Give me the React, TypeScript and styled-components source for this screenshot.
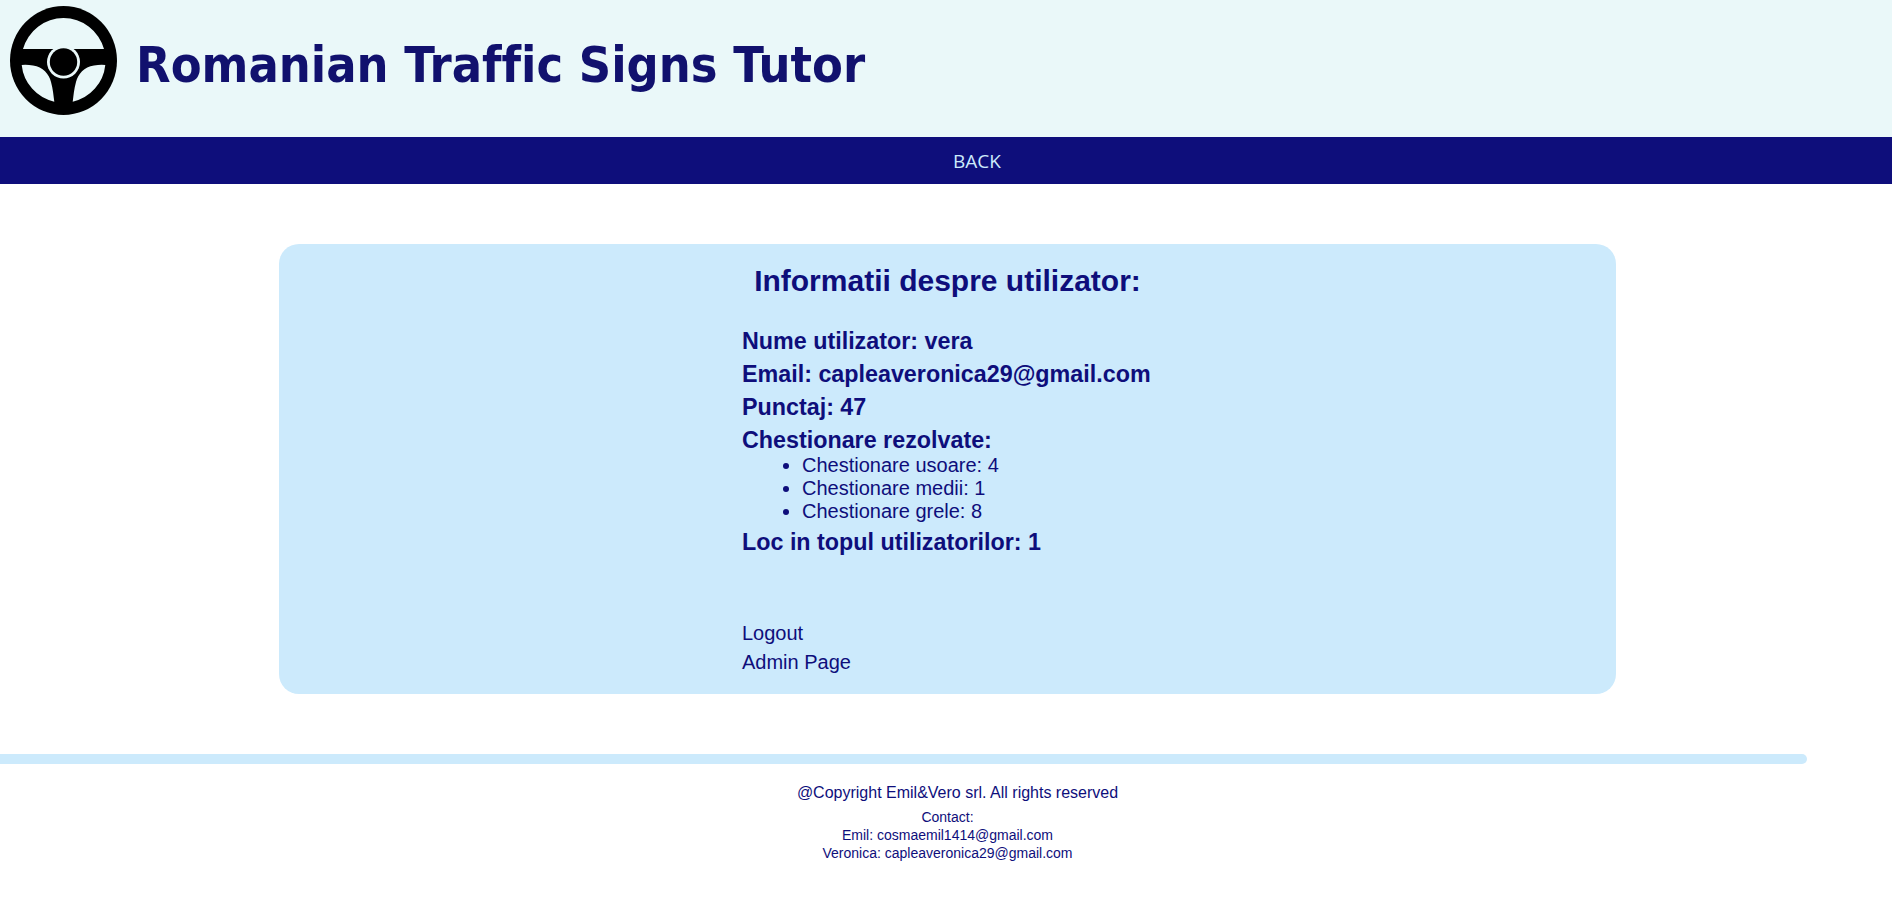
import React from 'react';
import styled, { createGlobalStyle } from 'styled-components';

const navy = '#0e0e7b';
const pale = '#cceafc';
const headerBg = '#eaf8f9';

const GlobalStyle = createGlobalStyle`
  html, body {
    margin: 0;
    padding: 0;
    background: #fff;
    font-family: "Liberation Sans", Arial, sans-serif;
    color: ${navy};
  }
`;

const Header = styled.header`
  height: 137px;
  background: ${headerBg};
  display: flex;
  align-items: flex-start;
  padding: 6px 0 0 10px;
  box-sizing: border-box;
  column-gap: 19px;
`;

const Title = styled.h1`
  margin: 30px 0 0;
  font-family: "DejaVu Sans Condensed", "DejaVu Sans", sans-serif;
  font-stretch: condensed;
  font-size: 50px;
  line-height: 58px;
  font-weight: bold;
  font-variant-ligatures: none;
  color: #11116e;
  white-space: nowrap;
`;

const Nav = styled.nav`
  height: 47px;
  background: ${navy};
  display: flex;
  align-items: center;
  justify-content: center;
  padding-left: 62px;
`;

const NavLink = styled.a`
  font-family: "Open Sans", sans-serif;
  font-size: 19px;
  color: #cceafc;
`;

const Card = styled.main`
  width: 1337px;
  height: 450px;
  box-sizing: border-box;
  margin: 60px 0 60px 279px;
  padding-top: 20px;
  background: ${pale};
  border-radius: 20px;
`;

const CardTitle = styled.h2`
  margin: 0 0 31px;
  font-size: 30px;
  line-height: 33px;
  font-weight: bold;
  text-align: center;
`;

const Details = styled.div`
  margin-left: 463px;
`;

const Row = styled.div`
  font-size: 23.3px;
  line-height: 27px;
  font-weight: bold;
  margin-bottom: 6px;
`;

const SubList = styled.ul`
  margin: -6px 0 6px;
  padding: 0 0 0 60px;
  font-size: 20px;
  line-height: 23px;
`;

const Links = styled.div`
  margin-top: 66px;
  display: flex;
  flex-direction: column;
  row-gap: 6px;
`;

const PlainLink = styled.a`
  font-size: 20px;
  line-height: 23px;
`;

const Divider = styled.div`
  width: 1807px;
  height: 10px;
  background: ${pale};
  border-radius: 0 5px 5px 0;
`;

const Footer = styled.footer`
  padding-top: 19px;
  text-align: center;
`;

const Copyright = styled.div`
  width: 1915px;
  font-size: 16px;
  line-height: 19px;
  margin-bottom: 6px;
`;

const ContactLine = styled.div`
  width: 1895px;
  font-size: 14px;
  line-height: 18px;
`;

const SteeringWheel = () => (
  <svg width="107" height="109" viewBox="0 0 107 109" aria-hidden="true">
    <ellipse cx="53.5" cy="54.5" rx="53.5" ry="54.5" fill="#000" />
    <g fill={headerBg}>
      <path d="M13 43A42 42 0 0 1 94 43Z" />
      <path d="M11.7 59Q17 58.5 23 59.5C33 61 39 68 41 76C43 83 43.500 90 44.300 95.700A42 42 0 0 1 11.700 59Z" />
      <path d="M95.300 59Q90 58.500 84 59.500C74 61 68 68 66 76C64 83 63.500 90 62.700 95.700A42 42 0 0 0 95.300 59Z" />
    </g>
    <circle cx="53.5" cy="56" r="16.5" fill={headerBg} />
    <circle cx="53.5" cy="56" r="13.7" fill="#000" />
  </svg>
);

const App: React.FC = () => (
  <>
    <GlobalStyle />
    <Header>
      <SteeringWheel />
      <Title>Romanian Traffic Signs Tutor</Title>
    </Header>
    <Nav>
      <NavLink>BACK</NavLink>
    </Nav>
    <Card>
      <CardTitle>Informatii despre utilizator:</CardTitle>
      <Details>
        <Row>Nume utilizator: vera</Row>
        <Row>Email: capleaveronica29@gmail.com</Row>
        <Row>Punctaj: 47</Row>
        <Row>Chestionare rezolvate:</Row>
        <SubList>
          <li>Chestionare usoare: 4</li>
          <li>Chestionare medii: 1</li>
          <li>Chestionare grele: 8</li>
        </SubList>
        <Row>Loc in topul utilizatorilor: 1</Row>
        <Links>
          <PlainLink>Logout</PlainLink>
          <PlainLink>Admin Page</PlainLink>
        </Links>
      </Details>
    </Card>
    <Divider />
    <Footer>
      <Copyright>@Copyright Emil&amp;Vero srl. All rights reserved</Copyright>
      <ContactLine>Contact:</ContactLine>
      <ContactLine>Emil: cosmaemil1414@gmail.com</ContactLine>
      <ContactLine>Veronica: capleaveronica29@gmail.com</ContactLine>
    </Footer>
  </>
);

export default App;
